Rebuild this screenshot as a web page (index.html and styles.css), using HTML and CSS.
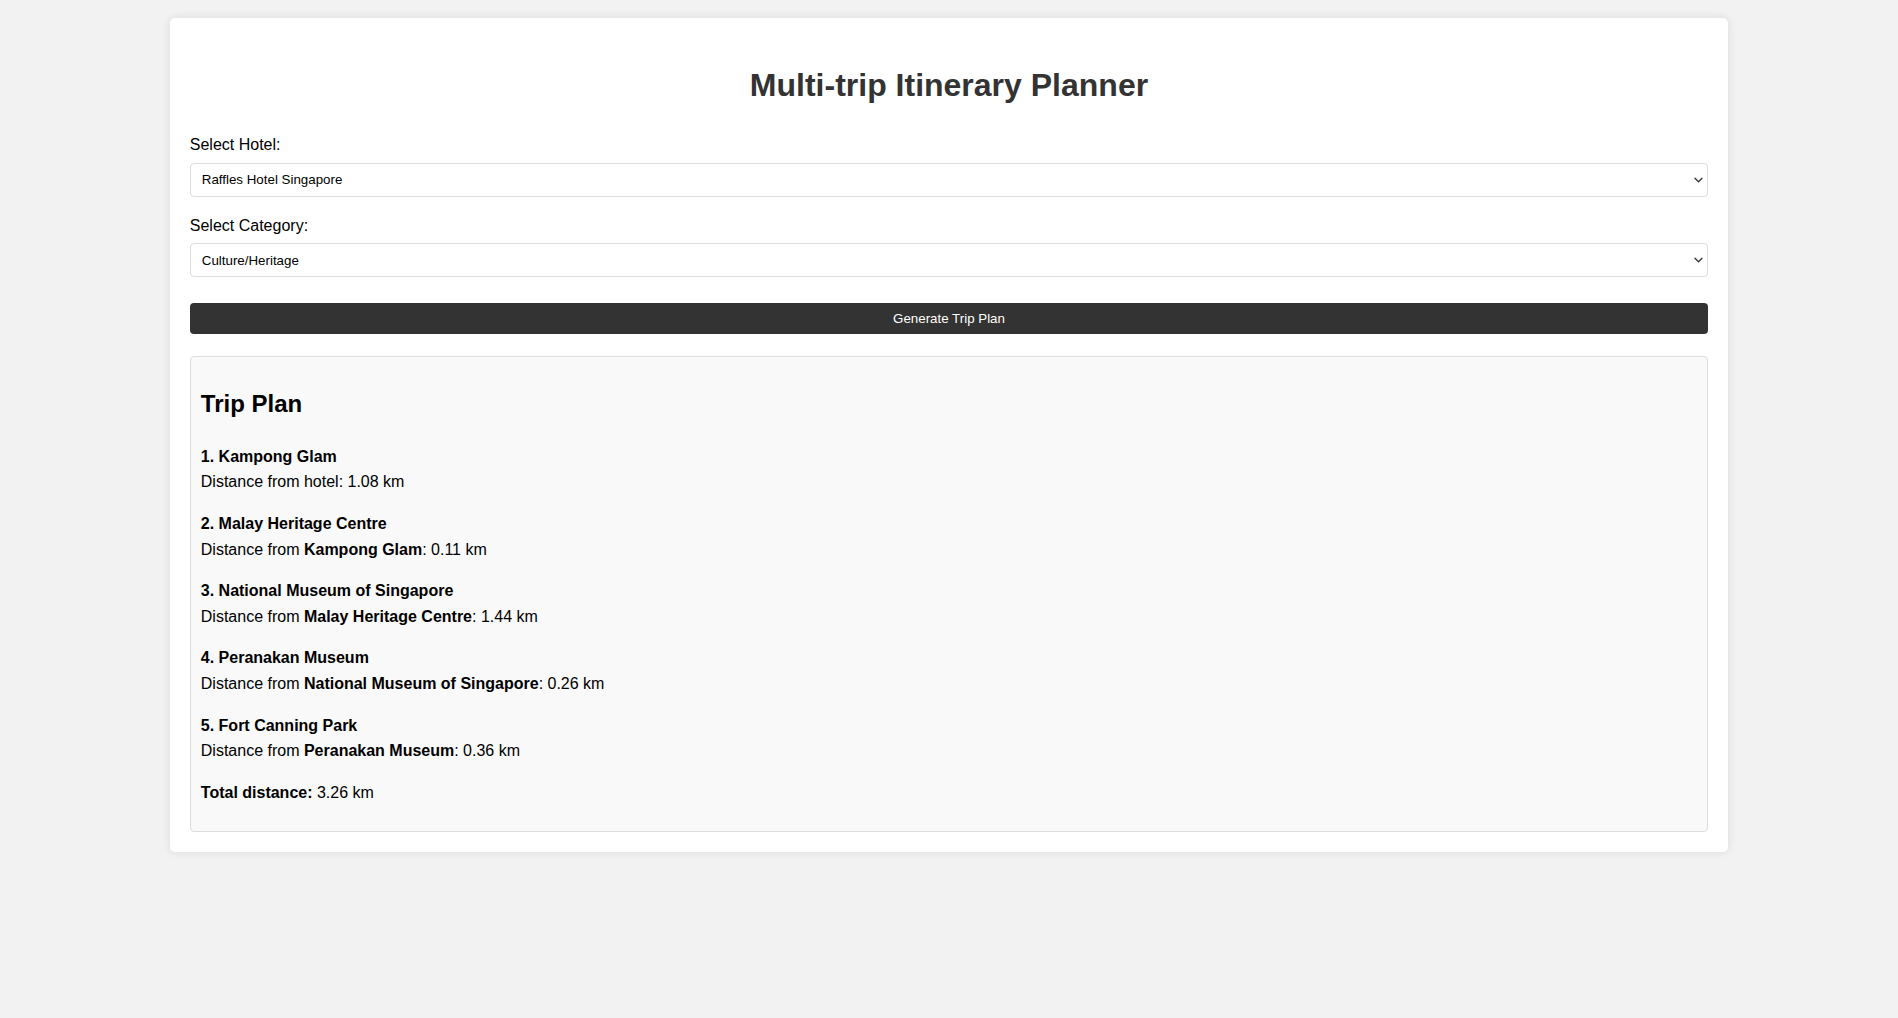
FILE: index.html
```html
<!DOCTYPE html>
<html lang="en">
<head>
<meta charset="utf-8">
<title>Multi-trip Itinerary Planner</title>
<link rel="stylesheet" href="styles.css">
</head>
<body>
<div class="container">
  <h1 class="title">Multi-trip Itinerary Planner</h1>

  <label class="field-label" for="hotel">Select Hotel:</label>
  <div class="select-wrap">
    <select id="hotel" class="select">
      <option>Raffles Hotel Singapore</option>
    </select>
    <svg class="chevron" width="9" height="6" viewBox="0 0 9 6" aria-hidden="true"><path d="M1 1.2l3.5 3.5 3.5-3.5" fill="none" stroke="#333" stroke-width="1.3" stroke-linecap="round" stroke-linejoin="round"/></svg>
  </div>

  <label class="field-label" for="category">Select Category:</label>
  <div class="select-wrap">
    <select id="category" class="select">
      <option>Culture/Heritage</option>
    </select>
    <svg class="chevron" width="9" height="6" viewBox="0 0 9 6" aria-hidden="true"><path d="M1 1.2l3.5 3.5 3.5-3.5" fill="none" stroke="#333" stroke-width="1.3" stroke-linecap="round" stroke-linejoin="round"/></svg>
  </div>

  <button class="generate-btn" type="button">Generate Trip Plan</button>

  <div class="results">
    <h2 class="results-title">Trip Plan</h2>
    <p class="stop"><strong>1. Kampong Glam</strong><br>Distance from hotel: 1.08 km</p>
    <p class="stop"><strong>2. Malay Heritage Centre</strong><br>Distance from <strong>Kampong Glam</strong>: 0.11 km</p>
    <p class="stop"><strong>3. National Museum of Singapore</strong><br>Distance from <strong>Malay Heritage Centre</strong>: 1.44 km</p>
    <p class="stop"><strong>4. Peranakan Museum</strong><br>Distance from <strong>National Museum of Singapore</strong>: 0.26 km</p>
    <p class="stop"><strong>5. Fort Canning Park</strong><br>Distance from <strong>Peranakan Museum</strong>: 0.36 km</p>
    <p class="stop"><strong>Total distance:</strong> 3.26 km</p>
  </div>
</div>
</body>
</html>
```

FILE: styles.css
```css
html, body {
  margin: 0;
  padding: 0;
}

body {
  background: #f2f2f2;
  font-family: "Liberation Sans", Arial, Helvetica, sans-serif;
  font-size: 16px;
  line-height: 1.6;
  color: #000;
}

.container {
  width: 80%;
  margin: 18px auto;
  padding: 20px;
  background: #fff;
  border-radius: 5px;
  box-shadow: 0 0 10px rgba(0, 0, 0, 0.1);
}

.title {
  margin: 22px 0 21px;
  font-size: 32px;
  font-weight: bold;
  text-align: center;
  color: #333;
}

.field-label {
  display: block;
  margin-bottom: 5px;
}

.select-wrap {
  position: relative;
  margin-bottom: 16px;
}

.select {
  display: block;
  width: 100%;
  height: 34px;
  padding: 0 11px;
  box-sizing: border-box;
  border: 1px solid #ddd;
  border-radius: 4px;
  background: #fff;
  font-family: "Liberation Sans", Arial, Helvetica, sans-serif;
  font-size: 13.33px;
  color: #000;
  -webkit-appearance: none;
  appearance: none;
}

.chevron {
  position: absolute;
  right: 5px;
  top: 14px;
  pointer-events: none;
}

.generate-btn {
  display: block;
  width: 100%;
  height: 31px;
  margin-top: 26px;
  padding: 0;
  border: none;
  border-radius: 4px;
  background: #333;
  color: #fff;
  font-family: "Liberation Sans", Arial, Helvetica, sans-serif;
  font-size: 13.33px;
  cursor: pointer;
}

.results {
  margin-top: 22px;
  padding: 10px;
  background: #f9f9f9;
  border: 1px solid #ddd;
  border-radius: 4px;
}

.results-title {
  margin: 18px 0 20px;
  font-size: 24px;
  line-height: 1.6;
}

.stop {
  margin: 16px 0;
}
```
